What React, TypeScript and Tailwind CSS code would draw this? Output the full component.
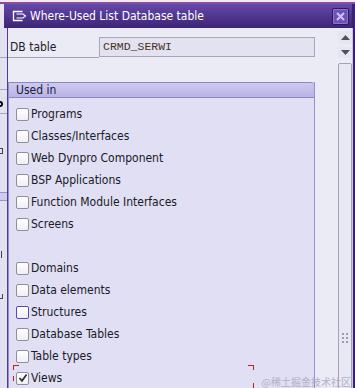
import React from 'react';

const font = { fontFamily: '"DejaVu Sans Condensed", "Liberation Sans", sans-serif' };

const rows: { label: string; checked?: boolean; focus?: boolean }[] = [
  { label: 'Programs' },
  { label: 'Classes/Interfaces' },
  { label: 'Web Dynpro Component' },
  { label: 'BSP Applications' },
  { label: 'Function Module Interfaces' },
  { label: 'Screens' },
  { label: '' },
  { label: 'Domains' },
  { label: 'Data elements' },
  { label: 'Structures', focus: true },
  { label: 'Database Tables' },
  { label: 'Table types' },
  { label: 'Views', checked: true },
];

function Checkbox({ checked, focus }: { checked?: boolean; focus?: boolean }) {
  return (
    <div
      className={`flex h-[13px] w-[13px] shrink-0 items-center justify-center rounded-[2px] border bg-gradient-to-b from-white to-[#f0f0f4] ${
        focus ? 'border-[#5a48b4]' : 'border-[#8e8e9c]'
      }`}
    >
      {checked && (
        <svg width="10" height="10" viewBox="0 0 10 10">
          <path d="M1.5 5 L4 7.8 L8.6 1.6" fill="none" stroke="#2a2a3a" strokeWidth="1.7" />
        </svg>
      )}
    </div>
  );
}

export default function App() {
  return (
    <div className="relative flex h-[388px] w-[355px] flex-col overflow-hidden bg-[#ebebf5]" style={font}>
      {/* strip of the window behind */}
      <div className="h-[4px] shrink-0 border-b-2 border-[#8a4c9e] bg-[#f1eaf3]" />

      {/* title bar */}
      <div className="flex h-[24px] shrink-0">
        <div className="w-[4px] bg-[#e9e7f2]" />
        <div className="flex flex-1 items-center bg-gradient-to-b from-[#6548aa] to-[#3d2575] pl-[7px] pr-[3px]">
          <svg width="17" height="14" viewBox="0 0 17 14" className="mr-[2px]">
            <path d="M11.5 2.5 H2.5 V11.5 H11.5" fill="none" stroke="#ffffff" strokeWidth="1.3" />
            <path d="M5.5 5 H12 L14.5 7 L12 9 H5.5" fill="none" stroke="#ffffff" strokeWidth="1.2" />
          </svg>
          <span className="text-[12px] leading-none text-white">Where-Used List Database table</span>
          <div className="ml-auto flex h-[17px] w-[17px] items-center justify-center rounded-[2px] border border-[#2c1a5c] bg-[#6c52b8] shadow-[inset_0_0_0_1px_#8c74d6]">
            <svg width="9" height="9" viewBox="0 0 9 9">
              <path d="M1 1 L8 8 M8 1 L1 8" stroke="#cfc2f4" strokeWidth="2" />
            </svg>
          </div>
        </div>
        <div className="w-[3px] bg-[#3a2470]" />
      </div>

      {/* body */}
      <div className="flex flex-1">
        {/* sliver of the screen behind the dialog */}
        <div className="w-[8px] shrink-0 overflow-hidden border-r border-[#4d3c92] bg-[#e2e1f0]">
          <div className="mt-[29px] h-px bg-[#a8a8bc]" />
          <div className="mt-[31px] h-px bg-[#a8a8bc]" />
          <div className="mt-[11px] h-[6px] w-[3px] rounded-r-full border-2 border-l-0 border-black" />
          <div className="mt-[6px] h-px bg-[#a8a8bc]" />
          <div className="mt-[34px] h-[6px] w-[3px] border-r border-y border-[#444]" />
          <div className="mt-[38px] h-[9px] border-y border-[#9a94cc] bg-[#cfcbee]" />
          <div className="mt-[50px] h-[7px] w-[2px] border-r border-[#444]" />
          <div className="mt-[36px] h-[5px] w-[3px] border-b border-r border-[#444]" />
        </div>

        {/* dialog content */}
        <div className="flex flex-1 flex-col">
          <div className="mt-[9px] flex h-[21px] items-start">
            <div className="flex h-[21px] w-[91px] items-center border-b border-[#a4a4b8] pl-[2px] text-[12px] text-[#1c1c28]">
              DB table
            </div>
            <div
              className="flex h-[20px] w-[216px] items-center border border-[#a6a6b4] bg-[#e2e2f1] pl-[3px] text-[11.5px] text-[#4a321c]"
              style={{ fontFamily: '"Liberation Mono", monospace' }}
            >
              CRMD_SERWI
            </div>
          </div>

          {/* group box */}
          <div className="mt-[24px] flex w-[307px] flex-1 flex-col border-x border-[#978ed2] bg-[#e0dff3]">
            <div className="flex h-[16px] items-center rounded-tr-[3px] border-y border-[#8e86cc] bg-gradient-to-b from-[#cdc9ef] to-[#b9b3e6] pl-[7px] text-[12px] leading-none text-[#20203a]">
              Used in
            </div>
            <div className="relative flex flex-col pl-[7px] pt-[5px]">
              {rows.map((r, i) => (
                <div key={i} className="flex h-[22px] items-center gap-[2px] text-[12px] text-[#1a1a28]">
                  {r.label && <Checkbox checked={r.checked} focus={r.focus} />}
                  {r.label && <span className="leading-none">{r.label}</span>}
                </div>
              ))}
              {/* red focus corners around "Views" */}
              <div className="absolute left-[4px] top-[267px] h-[5px] w-[6px] border-l border-t border-[#d01818]" />
              <div className="absolute left-[4px] top-[278px] h-[5px] w-px bg-[#d01818]" />
              <div className="absolute left-[239px] top-[267px] h-[5px] w-[6px] border-r border-t border-[#d01818]" />
              <div className="absolute left-[244px] top-[285px] h-[5px] w-px bg-[#d01818]" />
            </div>
          </div>
        </div>

        {/* scroll bar */}
        <div className="flex w-[14px] shrink-0 flex-col">
          <div className="mt-[3px] flex h-[13px] items-center justify-center bg-[#e6e6f1]">
            <svg width="9" height="5" viewBox="0 0 9 5">
              <path d="M0 5 L4.5 0 L9 5 Z" fill="#4e4e60" />
            </svg>
          </div>
          <div className="mt-[3px] flex h-[11px] items-center justify-center bg-[#e6e6f1]">
            <svg width="9" height="5" viewBox="0 0 9 5">
              <path d="M0 0 L9 0 L4.5 5 Z" fill="#4e4e60" />
            </svg>
          </div>
          <div className="mt-[5px] flex flex-1 flex-col items-center rounded-t-[2px] border border-[#a4a4b6] bg-[#e8e8f4]">
            <div className="mt-[269px] grid grid-cols-2 gap-x-[2px] gap-y-[2px]">
              {[0, 1, 2, 3, 4, 5].map((d) => (
                <div key={d} className="h-[2px] w-[2px] bg-[#9c9cb4]" />
              ))}
            </div>
          </div>
        </div>
        <div className="w-[3px] shrink-0 border-l border-[#c9c6e4] bg-[#3a2470]" />
      </div>

      {/* watermark */}
      <div
        className="absolute bottom-[1px] right-[4px] text-[10px] leading-none text-[#b2b0c6]"
        style={{ fontFamily: '"Noto Sans CJK SC", sans-serif' }}
      >
        @稀土掘金技术社区
      </div>
    </div>
  );
}
